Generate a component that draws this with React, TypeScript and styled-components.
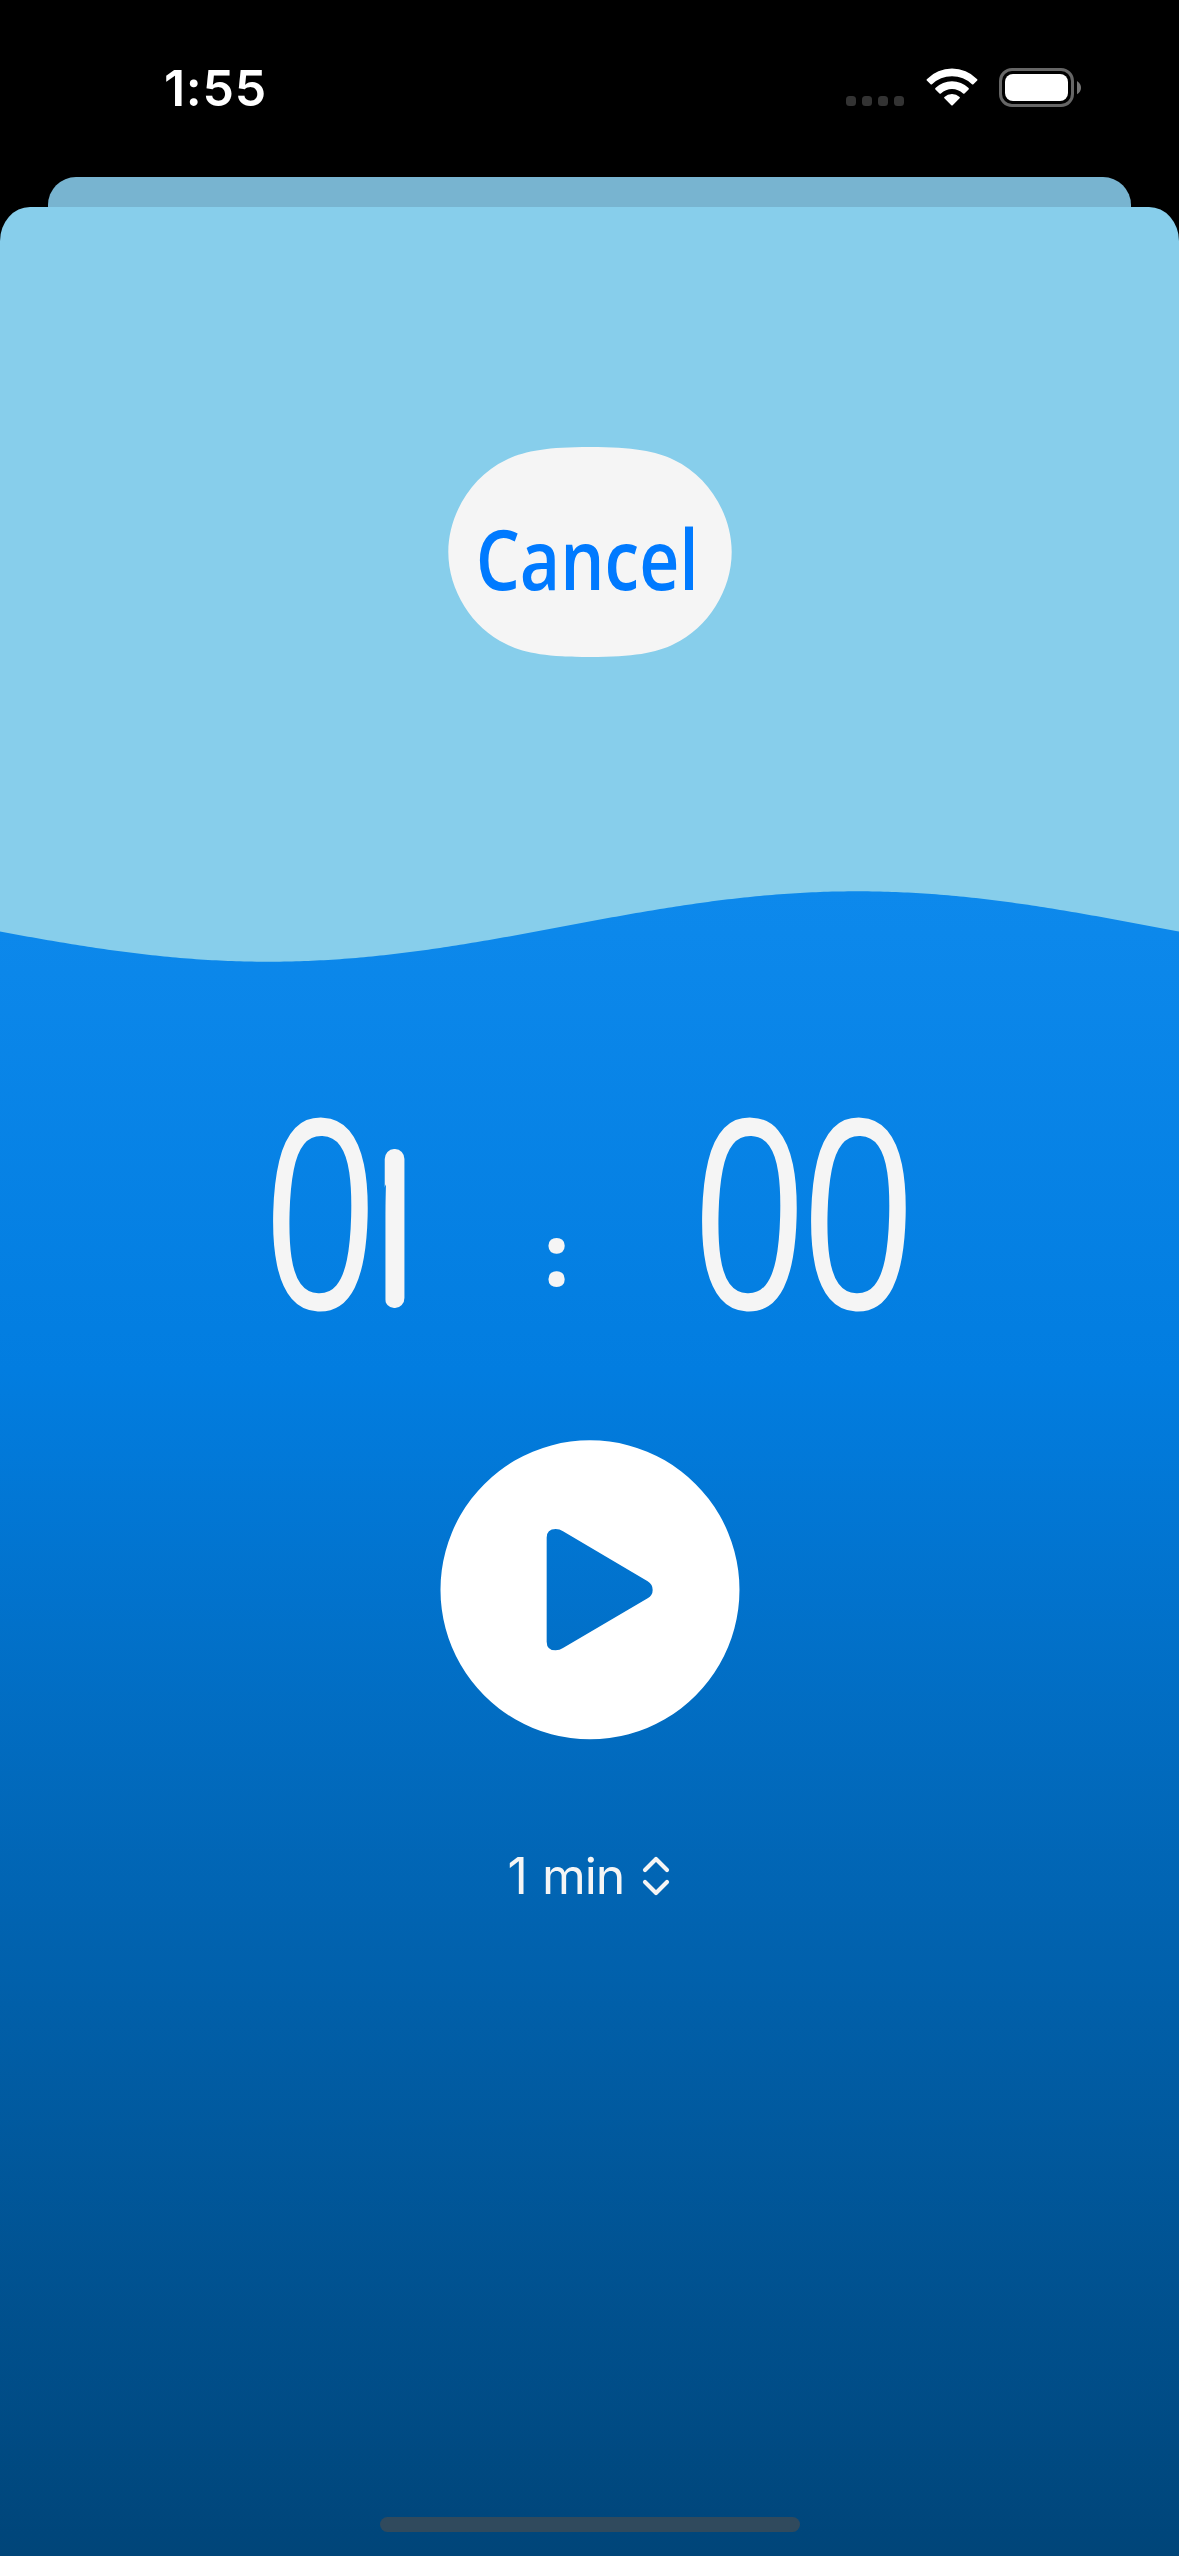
import React from "react";
import styled, { createGlobalStyle } from "styled-components";

const SKY = "#87ceeb";
const FOAM = "#f5f5f5";

const GlobalStyle = createGlobalStyle`
  html, body { margin: 0; padding: 0; background: #000; }
  *, *::before, *::after { box-sizing: border-box; }
  button { border: 0; padding: 0; background: none; font: inherit; color: inherit; }
  svg { display: block; flex: none; }
`;

const Screen = styled.div`
  display: flex;
  flex-direction: column;
  width: 1179px;
  height: 2556px;
  overflow: hidden;
  background: #000;
  font-family: Inter, "Liberation Sans", sans-serif;
`;

const StatusBar = styled.header`
  display: flex;
  justify-content: space-between;
  align-items: flex-start;
  height: 177px;
  padding: 68px 97px 0 164px;
  color: #fff;
`;

const Clock = styled.time`
  font-size: 50px;
  line-height: 40px;
  font-weight: 600;
  letter-spacing: 0.7px;
`;

const StatusIcons = styled.div`
  display: flex;
  align-items: flex-start;
`;

const CellularDots = styled.div`
  display: flex;
  gap: 6px;
  padding-top: 28px;
  margin-right: 22px;
`;

const Dot = styled.i`
  width: 10px;
  height: 10px;
  border-radius: 3.5px;
  background: #333;
`;

const BatterySlot = styled.div`
  margin-left: 21px;
`;

const BackSheet = styled.div`
  height: 30px;
  margin: 0 48px;
  flex: none;
  border-radius: 28px 28px 0 0;
  background: #78b4d0;
`;

const Sheet = styled.main`
  display: flex;
  flex-direction: column;
  flex: 1;
  overflow: hidden;
  border-radius: 30px 30px 0 0 / 34px 34px 0 0;
  background: ${SKY};
`;

const Sky = styled.section`
  display: flex;
  justify-content: center;
  align-items: flex-start;
  height: 684px;
  padding-top: 240px;
  flex: none;
`;

const CancelButton = styled.button`
  display: grid;
  width: 284px;
  height: 210px;
  place-items: center;
  & > * { grid-area: 1 / 1; }
`;

const CancelLabel = styled.span`
  font-family: "Open Sans", sans-serif;
  font-size: 83px;
  line-height: 84px;
  font-weight: 600;
  color: #007aff;
  padding: 12px 5px 0 0;
  transform: scaleX(0.84);
`;

const Sea = styled.section`
  display: flex;
  flex-direction: column;
  align-items: center;
  flex: 1;
  background: linear-gradient(to bottom, #0d89ec 0, #027de0 479px, #004579 1665px);
`;

const TimerRow = styled.div`
  display: flex;
  justify-content: space-between;
  width: 647px;
  height: 200px;
  margin-top: 150px;
  color: ${FOAM};
  font-family: "Open Sans", sans-serif;
`;

const DigitPair = styled.div`
  display: flex;
`;

const Zero = styled.span`
  display: flex;
  justify-content: center;
  width: 109px;
  font-size: 264px;
  line-height: 188px;
  font-weight: 500;
  transform: scaleX(0.76) rotate(2deg);
`;

/* The one is a bare upright stroke with rounded ends; the clip drops its flag. */
const One = styled.span`
  width: 127px;
  height: 218px;
  margin: 0 -50px;
  font-size: 222px;
  line-height: 218px;
  font-weight: 700;
  clip-path: inset(36px 36px 23px 57px round 16px / 10px);
  transform: scaleX(0.58);
`;

const Colon = styled.span`
  width: 40px;
  margin: 0 0 0 16px;
  padding-top: 98px;
  text-align: center;
  font-size: 83px;
  line-height: 83px;
  font-weight: 700;
  -webkit-text-stroke: 2px ${FOAM};
`;

const PlayButton = styled.button`
  margin-top: 127px;
`;

const DurationPicker = styled.button`
  display: flex;
  align-items: center;
  gap: 18px;
  height: 60px;
  margin-top: 106px;
  padding-right: 1px;
  color: ${FOAM};
  font-size: 50px;
  line-height: 60px;
  letter-spacing: -1px;
  word-spacing: 2px;
`;

const HomeIndicator = styled.div`
  width: 420px;
  height: 15px;
  margin: auto 0 24px;
  border-radius: 8px;
  background: #304a5d;
`;

function WifiIcon() {
  return (
    <svg width="52" height="38" viewBox="0 0 52 38" fill="#fff">
      <path d="M.8 11.2Q11.5.6 26 .6t25.2 10.6q.6.7 0 1.4l-3.8 3.6q-.7.6-1.4 0Q37.700 8.200 26 8.200T6 16.200q-.7.600-1.400 0L.8 12.600q-.6-.7 0-1.400z" />
      <path d="M9.400 20Q16.600 13.200 26 13.200T42.600 20q.6.700 0 1.400l-4.100 4q-.7.600-1.400 0Q32.300 20.900 26 20.900T14.900 25.400q-.7.600-1.400 0l-4.100-4q-.6-.7 0-1.400z" />
      <path d="M18.400 28.900Q21.600 26.100 26 26.100t7.600 2.800q.7.700 0 1.400l-6.900 7q-.7.600-1.400 0l-6.900-7q-.7-.7 0-1.400z" />
    </svg>
  );
}

function BatteryIcon() {
  return (
    <svg width="83" height="40" viewBox="0 0 83 40">
      <rect x="1.500" y="1.500" width="72" height="36" rx="11.500" fill="none" stroke="#666" strokeWidth="3" />
      <rect x="6" y="6" width="63" height="27" rx="8" fill="#fff" />
      <path d="M78 13q4 2.600 4 6.800t-4 6.400z" fill="#757575" />
    </svg>
  );
}

function CancelShape() {
  return (
    <svg width="284" height="210" viewBox="-142 -105 284 210">
      <path
        fill={FOAM}
        d="M0-105C43-105 66-101 84-92C118-76 141.700-38 141.700 0C141.700 38 118 76 84 92C66 101 43 105 0 105C-43 105-66 101-84 92C-118 76-141.700 38-141.700 0C-141.700-38-118-76-84-92C-66-101-43-105 0-105Z"
      />
    </svg>
  );
}

function Wave() {
  const points: string[] = [];
  for (let x = 0; x <= 1180; x += 4) {
    const y = 35.5 + 35.2 * Math.cos((2 * Math.PI * (x - 268)) / 1179);
    points.push(`L${x} ${y.toFixed(2)}`);
  }
  return (
    <svg width="1179" height="72" viewBox="0 0 1179 72">
      <path d={`M0-2${points.join("")}L1180-2Z`} fill={SKY} />
    </svg>
  );
}

function PlayIcon() {
  return (
    <svg width="300" height="300" viewBox="29 29 900 900">
      <path
        fill="#fff"
        fillRule="evenodd"
        d="M479 30A448.500 448.500 0 1 1 478.900 30ZM349 322Q349 296 376 296Q388 296 398 303L652 453Q667 462 667 479Q667 495 652 504L398 653Q388 660 376 660Q349 660 349 634Z"
      />
    </svg>
  );
}

function UpDownIcon() {
  return (
    <svg width="28" height="40" viewBox="0 0 28 40" fill="none" stroke={FOAM} strokeWidth="4.200" strokeLinecap="round" strokeLinejoin="round">
      <path d="M3 14L14 3L25 14M3 26L14 37L25 26" />
    </svg>
  );
}

export default function App() {
  return (
    <>
      <GlobalStyle />
      <Screen>
        <StatusBar>
          <Clock>1:55</Clock>
          <StatusIcons>
            <CellularDots>
              <Dot />
              <Dot />
              <Dot />
              <Dot />
            </CellularDots>
            <WifiIcon />
            <BatterySlot>
              <BatteryIcon />
            </BatterySlot>
          </StatusIcons>
        </StatusBar>
        <BackSheet />
        <Sheet>
          <Sky>
            <CancelButton>
              <CancelShape />
              <CancelLabel>Cancel</CancelLabel>
            </CancelButton>
          </Sky>
          <Sea>
            <Wave />
            <TimerRow>
              <DigitPair>
                <Zero>0</Zero>
                <One>1</One>
              </DigitPair>
              <Colon>:</Colon>
              <DigitPair>
                <Zero>0</Zero>
                <Zero>0</Zero>
              </DigitPair>
            </TimerRow>
            <PlayButton aria-label="Start">
              <PlayIcon />
            </PlayButton>
            <DurationPicker>
              1 min
              <UpDownIcon />
            </DurationPicker>
            <HomeIndicator />
          </Sea>
        </Sheet>
      </Screen>
    </>
  );
}
